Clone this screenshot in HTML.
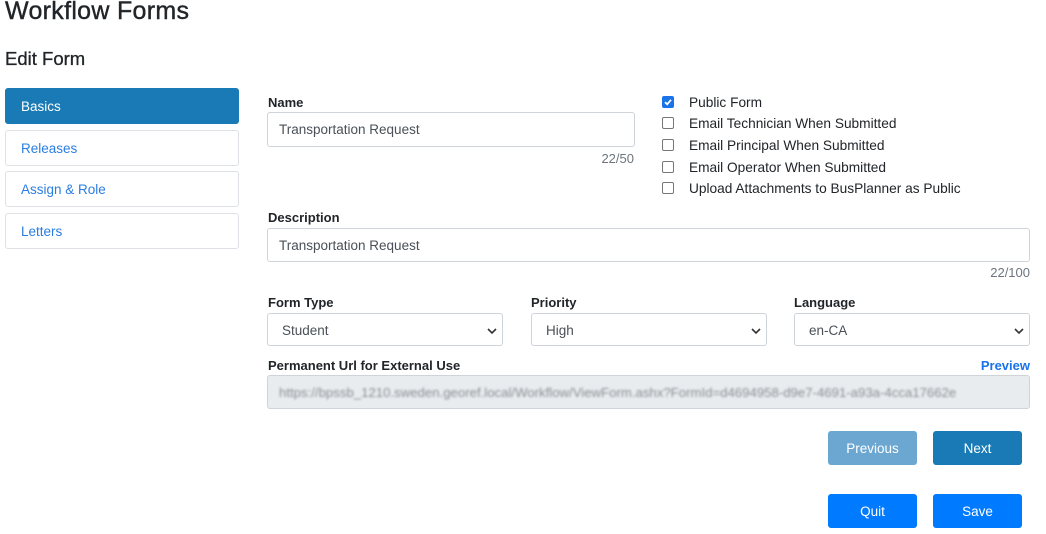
<!DOCTYPE html>
<html><head><style>
*{box-sizing:border-box;margin:0;padding:0}
body{width:1046px;height:534px;background:#fff;font-family:"Liberation Sans",sans-serif;color:#212529;position:relative;overflow:hidden}
.a{position:absolute}
.nav{position:absolute;left:5px;width:234px;height:36px;border:1px solid #dee2e6;border-radius:3px;padding-left:15px;line-height:36px;font-size:13.5px;color:#2a7de1}
.lbl{position:absolute;font-size:13px;font-weight:bold;color:#212529}
.inp{position:absolute;border:1px solid #ced4da;border-radius:3px;font-size:13.5px;line-height:34px;padding-left:11px;color:#495057;background:#fff}
.cnt{position:absolute;font-size:13px;color:#6c757d;text-align:right}
.cb{position:absolute;left:662px;width:12px;height:12px;border:1px solid #777;border-radius:2px;background:#fff}
.ct{position:absolute;left:689px;font-size:13.7px;color:#212529}
.btn{position:absolute;width:89px;height:34px;border-radius:3px;color:#fff;font-size:13.5px;text-align:center;line-height:35px}
.chev{position:absolute;right:5px;top:13px}
</style></head><body>
<div class="a" style="left:5px;top:-3px;font-size:25px;color:#212529;-webkit-text-stroke:0.4px #212529;letter-spacing:0.3px">Workflow Forms</div>
<div class="a" style="left:5px;top:48px;font-size:18.5px;-webkit-text-stroke:0.3px #212529">Edit Form</div>
<div class="nav" style="top:88px;background:#1a7ab5;border-color:#1a7ab5;color:#fff">Basics</div>
<div class="nav" style="top:130px">Releases</div>
<div class="nav" style="top:171px">Assign &amp; Role</div>
<div class="nav" style="top:213px">Letters</div>

<div class="lbl" style="left:268px;top:95px">Name</div>
<div class="inp" style="left:267px;top:112px;width:368px;height:35px">Transportation Request</div>
<div class="cnt" style="left:560px;top:151px;width:74px">22/50</div>

<div class="cb" style="top:96px;background:#1a73e8;border-color:#1a73e8"><svg width="10" height="10" viewBox="0 0 10 10" style="position:absolute;left:0;top:0"><path d="M2 5.2 L4.2 7.3 L8 2.8" stroke="#fff" stroke-width="1.8" fill="none"/></svg></div>
<div class="ct" style="top:95px">Public Form</div>
<div class="cb" style="top:117px"></div><div class="ct" style="top:116px">Email Technician When Submitted</div>
<div class="cb" style="top:139px"></div><div class="ct" style="top:138px">Email Principal When Submitted</div>
<div class="cb" style="top:161px"></div><div class="ct" style="top:160px">Email Operator When Submitted</div>
<div class="cb" style="top:182px"></div><div class="ct" style="top:181px">Upload Attachments to BusPlanner as Public</div>

<div class="lbl" style="left:268px;top:210px">Description</div>
<div class="inp" style="left:267px;top:228px;width:763px;height:34px">Transportation Request</div>
<div class="cnt" style="left:930px;top:265px;width:100px">22/100</div>

<div class="lbl" style="left:268px;top:295px">Form Type</div>
<div class="lbl" style="left:531px;top:295px">Priority</div>
<div class="lbl" style="left:794px;top:295px">Language</div>
<div class="inp" style="left:267px;top:313px;width:236px;height:33px;padding-left:14px">Student<svg class="chev" width="10" height="8" viewBox="0 0 10 8"><path d="M1 2 L5 6 L9 2" stroke="#333" stroke-width="1.6" fill="none"/></svg></div>
<div class="inp" style="left:531px;top:313px;width:236px;height:33px;padding-left:14px">High<svg class="chev" width="10" height="8" viewBox="0 0 10 8"><path d="M1 2 L5 6 L9 2" stroke="#333" stroke-width="1.6" fill="none"/></svg></div>
<div class="inp" style="left:794px;top:313px;width:236px;height:33px;padding-left:14px">en-CA<svg class="chev" width="10" height="8" viewBox="0 0 10 8"><path d="M1 2 L5 6 L9 2" stroke="#333" stroke-width="1.6" fill="none"/></svg></div>

<div class="lbl" style="left:268px;top:358px">Permanent Url for External Use</div>
<div class="lbl" style="left:970px;top:358px;width:60px;text-align:right;color:#1a73e8">Preview</div>
<div class="inp" style="left:267px;top:375px;width:763px;height:34px;background:#e9ecef"><div style="color:#8a8e92;font-size:13.2px;filter:blur(1px);white-space:nowrap;overflow:hidden;width:745px">https://bpssb_1210.sweden.georef.local/Workflow/ViewForm.ashx?FormId=d4694958-d9e7-4691-a93a-4cca17662e</div></div>

<div class="btn" style="left:828px;top:431px;background:#6ba7d0">Previous</div>
<div class="btn" style="left:933px;top:431px;background:#1a7ab5">Next</div>
<div class="btn" style="left:828px;top:494px;background:#007bff">Quit</div>
<div class="btn" style="left:933px;top:494px;background:#007bff">Save</div>
</body></html>
